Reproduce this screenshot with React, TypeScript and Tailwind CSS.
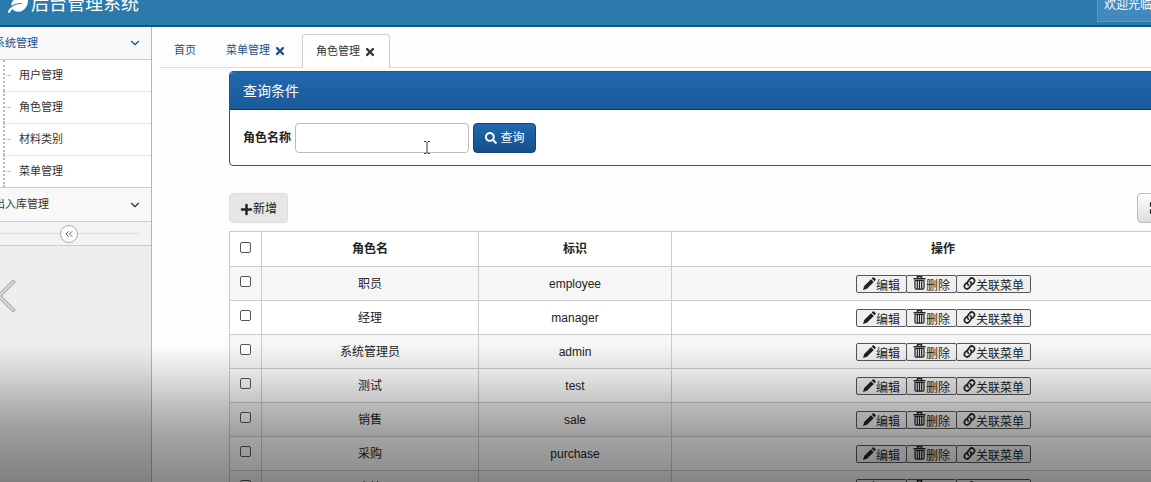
import type { ReactNode } from 'react';
import { FaLeaf, FaPlus, FaSearch, FaTimes } from 'react-icons/fa';
import { ChevronDown, ChevronsLeft } from 'lucide-react';
import { BsGridFill } from 'react-icons/bs';

const subMenus = ['用户管理', '角色管理', '材料类别', '菜单管理'];

const roles = [
  { name: '职员', code: 'employee' },
  { name: '经理', code: 'manager' },
  { name: '系统管理员', code: 'admin' },
  { name: '测试', code: 'test' },
  { name: '销售', code: 'sale' },
  { name: '采购', code: 'purchase' },
  { name: '仓管', code: 'storage' },
];

export default function App() {
  return (
    <div className="relative h-screen overflow-hidden bg-[#fdfdfd] font-['Liberation_Sans','Noto_Sans_CJK_SC',sans-serif] text-xs text-[#222]">
      {/* page is scrolled a little to the right and down */}
      <div className="-ml-10 -mt-[18px]">
        <Header />
        <div className="flex">
          <Sidebar />
          <main className="min-w-0 flex-1 pl-2">
            <Tabs />
            <div className="-mr-16 ml-[69px] pt-[3px]">
              <SearchPanel />
              <Toolbar />
              <RoleTable />
            </div>
          </main>
        </div>
      </div>

      {/* previous arrow */}
      <button type="button" aria-label="上一个" className="absolute left-0 top-[278px]">
        <svg width="18" height="36" viewBox="0 0 18 36" fill="none" strokeLinecap="square">
          <path d="M13 4L-1 18L13 32" stroke="#a8a8a8" strokeWidth="4" />
          <path d="M13 4L-1 18L13 32" stroke="#dedede" strokeWidth="1.8" />
        </svg>
      </button>
      {/* bottom shade */}
      <div className="pointer-events-none absolute inset-x-0 bottom-0 h-[137px] bg-[linear-gradient(to_bottom,transparent,rgba(0,0,0,0.09)_18%,rgba(0,0,0,0.25)_45%,rgba(0,0,0,0.36)_67%,rgba(0,0,0,0.46))]" />
      {/* text cursor */}
      <svg className="pointer-events-none absolute left-[423px] top-[141px]" width="8" height="13" viewBox="0 0 8 13" fill="none" stroke="#333">
        <path d="M1 .5h2l1 1 1-1h2M4 1.5v10M1 12.5h2l1-1 1 1h2" />
      </svg>
    </div>
  );
}

function Header() {
  return (
    <header className="flex h-[45px] items-center justify-between border-b-2 border-[#0f548c] bg-[#2c7aad] pl-12 text-white">
      <a href="#" className="flex items-center gap-[3px] text-lg leading-6">
        <FaLeaf className="h-5 w-5" />
        后台管理系统
      </a>
      <div className="-mr-16 mb-1 h-10 w-[118px] border border-[#5799c9] bg-[#4289bd] pl-1.5 pt-[14px] text-xs">
        欢迎光临,
      </div>
    </header>
  );
}

function Sidebar() {
  return (
    <aside className="h-screen w-48 shrink-0 border-r border-[#b5b5b5] bg-[#eee] text-[11px]">
      <button type="button" className="flex h-[33px] w-full items-center border-b border-[#ccc] bg-[#f8f8f8] pl-[34px] pr-[9px] text-[#1c5089]">
        系统管理
        <ChevronDown className="ml-auto h-3.5 w-3.5" />
      </button>
      <ul className="border-b border-[#ccc] bg-white pl-[43px]">
        {subMenus.map((m, i) => (
          <li key={m} className={`border-l-2 border-dotted border-[#a9bccb] ${i > 0 ? 'border-t border-t-[#ccc]' : ''}`}>
            <a href="#" className="flex h-[31px] items-center gap-2 pl-px text-[#333]">
              <span className="w-[5px] border-t border-dotted border-[#8fa8bd]" />
              {m}
            </a>
          </li>
        ))}
      </ul>
      <button type="button" className="flex h-[34px] w-full items-center border-b border-[#ccc] bg-[#f8f8f8] pl-[34px] pr-[9px] text-[#333]">
        出入库管理
        <ChevronDown className="ml-auto h-3.5 w-3.5" />
      </button>
      <div className="flex h-6 items-center border-b border-[#ccc] bg-[#f3f3f3] pl-10 pr-3">
        <span className="w-[60px] border-t border-[#ddd]" />
        <button type="button" aria-label="收起" className="flex h-[18px] w-[18px] items-center justify-center rounded-full border border-[#aaa] bg-white text-[#666]">
          <ChevronsLeft className="h-3 w-3" />
        </button>
        <span className="flex-1 border-t border-[#ddd]" />
      </div>
    </aside>
  );
}

function Tabs() {
  return (
    <nav className="flex h-[41px] items-end gap-[3px] border-b border-[#ddd] text-[11px] text-[#1c5089]">
      <a href="#" className="flex h-[33px] items-center px-[14px]">首页</a>
      <a href="#" className="flex h-[33px] items-center gap-1 px-[13px]">
        菜单管理
        <FaTimes className="h-3 w-3" />
      </a>
      <a href="#" className="-mb-px flex h-[34px] items-center gap-1 rounded-t border border-b-0 border-[#ccc] bg-white px-[13px] text-[#333]">
        角色管理
        <FaTimes className="h-3 w-3" />
      </a>
    </nav>
  );
}

function SearchPanel() {
  return (
    <section className="rounded border border-[#1d5a94] bg-white">
      <h2 className="rounded-t-sm border-b border-[#003a7a] bg-linear-to-b from-[#2069b0] to-[#1a5a9a] px-[13px] pb-2 pt-[9px] text-sm leading-5 text-white">
        查询条件
      </h2>
      <form className="flex items-center gap-1 px-[13px] pb-3 pt-[13px]">
        <label htmlFor="roleName" className="text-xs font-bold">角色名称</label>
        <input id="roleName" type="text" className="h-[30px] w-[174px] rounded border border-[#bbb] bg-white px-2 outline-none" />
        <button type="button" className="flex h-[30px] w-[63px] items-center justify-center gap-1 rounded border border-[#0f4580] bg-linear-to-b from-[#2069b0] to-[#164f8a] text-white">
          <FaSearch className="h-3 w-3" />
          查询
        </button>
      </form>
    </section>
  );
}

function Toolbar() {
  return (
    <div className="flex items-center justify-between pb-2 pt-[27px]">
      <button type="button" className="flex h-[30px] w-[59px] items-center justify-center rounded-sm border border-[#ddd] bg-[#e6e6e6] pt-0.5">
        <FaPlus className="h-[13px] w-[13px]" />
        新增
      </button>
      <button type="button" aria-label="列" className="mr-10 flex h-[30px] w-[38px] items-center justify-center rounded border border-[#bbb] bg-linear-to-b from-white to-[#ddd]">
        <BsGridFill className="h-3.5 w-3.5" />
      </button>
    </div>
  );
}

function RoleTable() {
  return (
    <table className="w-full table-fixed border-collapse border border-[#ccc] text-center">
      <thead>
        <tr className="h-[35px] bg-white">
          <th className="w-8 border border-[#ccc]"><Check label="全选" /></th>
          <th className="w-[217px] border border-[#ccc]">角色名</th>
          <th className="w-[193px] border border-[#ccc]">标识</th>
          <th className="border border-[#ccc]">操作</th>
        </tr>
      </thead>
      <tbody>
        {roles.map(r => (
          <tr key={r.code} className="h-[34px] odd:bg-[#f6f6f6] even:bg-white">
            <td className="border border-[#ccc]"><Check label={r.name} /></td>
            <td className="border border-[#ccc]">{r.name}</td>
            <td className="border border-[#ccc]">{r.code}</td>
            <td className="border border-[#ccc]">
              <div className="flex justify-center pt-px">
                <Action text="编辑"><PencilIcon /></Action>
                <Action text="删除"><TrashIcon /></Action>
                <Action text="关联菜单"><LinkIcon /></Action>
              </div>
            </td>
          </tr>
        ))}
      </tbody>
    </table>
  );
}

function Check({ label }: { label: string }) {
  return <input type="checkbox" aria-label={label} className="mx-auto mb-1 block h-[11px] w-[11px] appearance-none rounded-xs border border-[#555] bg-white" />;
}

function Action({ text, children }: { text: string; children: ReactNode }) {
  return (
    <button type="button" className="-mr-px flex h-[18px] items-start rounded-xs border border-[#555] bg-[#f0f0f0] px-1.5 text-[#222]">
      {children}
      <span className="pt-0.5 leading-4">{text}</span>
    </button>
  );
}

function PencilIcon() {
  return (
    <svg className="mt-px" width="13" height="13" viewBox="0 0 13 13" fill="currentColor">
      <path d="M0 13l1.2-4L8 2.2l2.8 2.8L4 11.8zM8.7 1.5l1-1q.6-.6 1.3 0L12.5 2q.6.6 0 1.3l-1 1z" />
    </svg>
  );
}

function TrashIcon() {
  return (
    <svg width="13" height="14" viewBox="0 0 13 14" fill="none" stroke="currentColor">
      <path d="M.5 2.800h12M4.500 2.500v-2h4v2" strokeWidth="1.500" />
      <path d="M1.500 4.500h10M2 4.500v7.500q0 1.200 1.200 1.200h6.600q1.200 0 1.200-1.200V4.500M4.300 4.500v8M6.500 4.500v8M8.700 4.500v8" strokeWidth="1.200" />
    </svg>
  );
}

function LinkIcon() {
  return (
    <svg className="mt-px" width="13" height="13" viewBox="0 0 13 13" fill="none" stroke="currentColor" strokeWidth="1.700" strokeLinecap="round">
      <path d="M5.400 8.200Q3.600 6.500 4.900 4.600L6.800 2.100Q8.400.200 10.500 1.600 12.300 3.200 11.100 5.200L9.700 7" />
      <path d="M7.400 4.900Q9.200 6.500 7.900 8.400L6.100 10.900Q4.400 12.800 2.400 11.400.600 9.800 1.800 7.800L3.200 6" />
    </svg>
  );
}
